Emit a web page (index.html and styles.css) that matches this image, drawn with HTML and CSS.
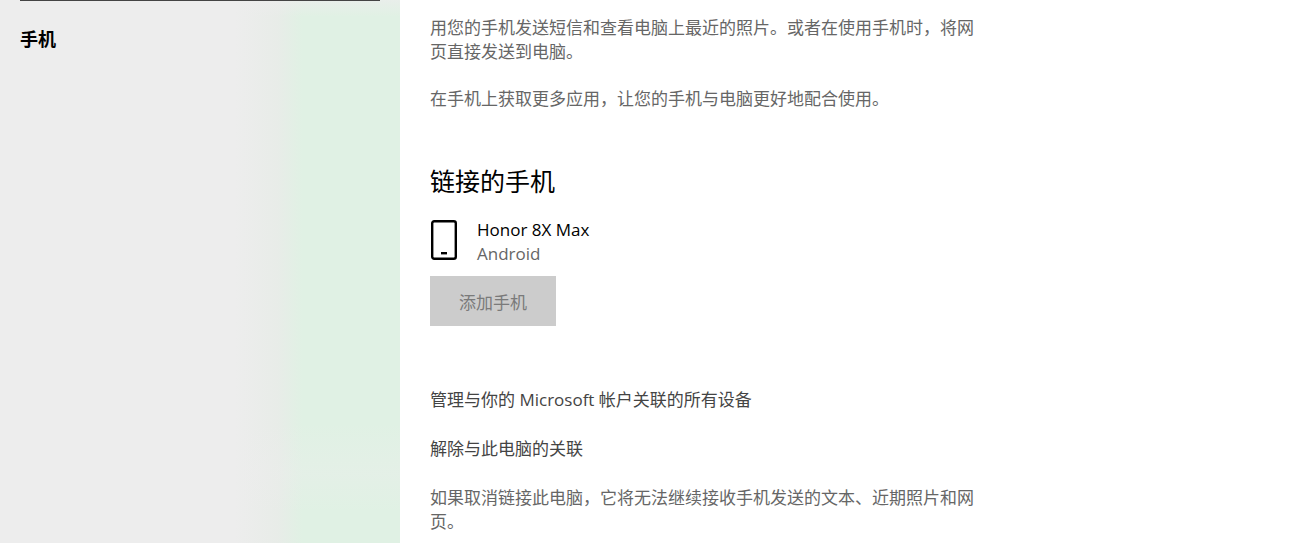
FILE: index.html
```
<!DOCTYPE html>
<html lang="zh-CN">
  <head>
    <meta charset="utf-8">
    <title>手机</title>
    <link rel="stylesheet" href="styles.css">
  </head>
  <body>
    <nav class="sidebar">
      <div class="search-line"></div>
      <h3>手机</h3>
    </nav>

    <main class="content">
      <p>用您的手机发送短信和查看电脑上最近的照片。或者在使用手机时，将网页直接发送到电脑。</p>
      <p>在手机上获取更多应用，让您的手机与电脑更好地配合使用。</p>

      <h2>链接的手机</h2>
      <div class="device">
        <svg width="27" height="40" viewBox="0 0 27 40">
          <rect x="2.2" y="1.2" width="23.6" height="37.6" rx="2" fill="none" stroke="#000" stroke-width="2.4"/>
          <rect x="11" y="32" width="6" height="2.4"/>
        </svg>
        <div class="device-info">
          <div>Honor 8X Max</div>
          <div class="os">Android</div>
        </div>
      </div>
      <button type="button" class="add" disabled>添加手机</button>

      <div class="links">
        <a href="#">管理与你的 Microsoft 帐户关联的所有设备</a>
        <a href="#">解除与此电脑的关联</a>
      </div>
      <p>如果取消链接此电脑，它将无法继续接收手机发送的文本、近期照片和网页。</p>
    </main>
  </body>
</html>
```
FILE: styles.css
```
* {
  box-sizing: border-box;
}
body {
  margin: 0;
  display: flex;
  min-height: 100vh;
  background: #fff;
  color: #000;
  font-family: "Open Sans", "Noto Sans CJK SC", sans-serif;
  font-size: 17px;
  line-height: 24px;
}
.sidebar {
  flex: none;
  width: 400px;
  padding: 0 20px;
  background:
    linear-gradient(to bottom, rgba(237, 237, 237, .7) 0, rgba(237, 237, 237, 0) 3%, rgba(237, 237, 237, 0) 76%, rgba(237, 237, 237, .3) 85%, rgba(237, 237, 237, 0) 92%),
    linear-gradient(to right, #ededed 0, #ededed 235px, #e8ece8 278px, #e0f1e4 302px, #e0f1e4 100%);
}
.search-line {
  height: 1px;
  background: #444;
}
.sidebar h3 {
  margin: 26px 0 0;
  font-size: 18px;
}
.content {
  max-width: 588px;
  padding: 16px 2px 0 30px;
}
.content p {
  margin: 0 0 23px;
  color: #666;
}
.content h2 {
  margin: 54px 0 21px;
  font-size: 25px;
  font-weight: normal;
  line-height: 32px;
}
.device {
  display: flex;
  gap: 20px;
  align-items: flex-start;
}
.device svg {
  margin-top: 2px;
}
.os {
  color: #666;
}
.add {
  display: block;
  margin: 10px 0 62px;
  padding: 0 29px;
  height: 50px;
  border: 0;
  background: #ccc;
  color: #7a7a7a;
  font-family: inherit;
  font-size: 17px;
}
.links a {
  display: block;
  margin-bottom: 25px;
  color: #444;
  text-decoration: none;
}
```
